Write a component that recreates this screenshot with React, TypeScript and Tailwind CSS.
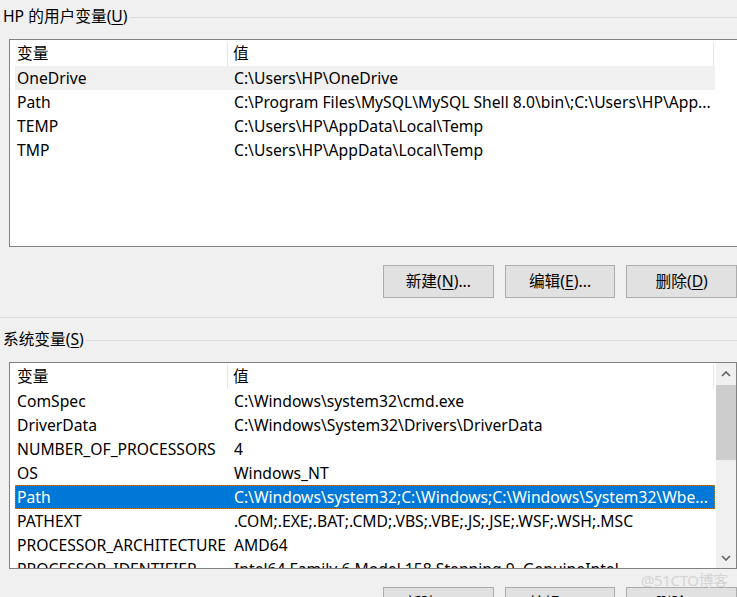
import React from 'react'

type Row = { name: string; value: string; hover?: boolean; selected?: boolean }

const userVars: Row[] = [
  { name: 'OneDrive', value: 'C:\\Users\\HP\\OneDrive', hover: true },
  { name: 'Path', value: 'C:\\Program Files\\MySQL\\MySQL Shell 8.0\\bin\\;C:\\Users\\HP\\App...' },
  { name: 'TEMP', value: 'C:\\Users\\HP\\AppData\\Local\\Temp' },
  { name: 'TMP', value: 'C:\\Users\\HP\\AppData\\Local\\Temp' },
]

const sysVars: Row[] = [
  { name: 'ComSpec', value: 'C:\\Windows\\system32\\cmd.exe' },
  { name: 'DriverData', value: 'C:\\Windows\\System32\\Drivers\\DriverData' },
  { name: 'NUMBER_OF_PROCESSORS', value: '4' },
  { name: 'OS', value: 'Windows_NT' },
  { name: 'Path', value: 'C:\\Windows\\system32;C:\\Windows;C:\\Windows\\System32\\Wbe...', selected: true },
  { name: 'PATHEXT', value: '.COM;.EXE;.BAT;.CMD;.VBS;.VBE;.JS;.JSE;.WSF;.WSH;.MSC' },
  { name: 'PROCESSOR_ARCHITECTURE', value: 'AMD64' },
  { name: 'PROCESSOR_IDENTIFIER', value: 'Intel64 Family 6 Model 158 Stepping 9, GenuineIntel' },
]

function GroupTitle({ label, hotkey }: { label: string; hotkey: string }) {
  return (
    <div className="flex items-center h-[20px] pl-[3px]">
      <span className="whitespace-nowrap leading-none">
        {label}(<span className="underline underline-offset-2">{hotkey}</span>)
      </span>
      <div className="flex-1 h-px bg-[#dcdcdc] ml-[2px]" />
    </div>
  )
}

function Header() {
  return (
    <div className="flex h-[26px] w-[700px] items-center pt-[2px]">
      <div className="w-[213px] pl-[2px] h-full flex items-center border-r border-[#e5e5e5]">变量</div>
      <div className="w-[486px] pl-[5px] h-full flex items-center border-r border-[#e5e5e5]">值</div>
    </div>
  )
}

function ListRow({ row }: { row: Row }) {
  const bg = row.selected
    ? 'bg-[#0078d7] text-white outline-1 outline-dotted outline-[#c07a2a] -outline-offset-1'
    : row.hover
      ? 'bg-[#f0f0f0]'
      : ''
  return (
    <div className={`flex h-[24px] w-[700px] items-center whitespace-nowrap pt-[2px] ${bg}`}>
      <div className="w-[213px] pl-[2px] overflow-hidden">{row.name}</div>
      <div className="flex-1 pl-[6px] overflow-hidden">{row.value}</div>
    </div>
  )
}

function Btn({ label, hotkey, dots }: { label: string; hotkey: string; dots?: boolean }) {
  return (
    <div className="w-[111px] h-[33px] bg-[#e1e1e1] border border-[#adadad] flex items-center justify-center">
      <span>
        {label}(<span className="underline underline-offset-2">{hotkey}</span>){dots ? '...' : ''}
      </span>
    </div>
  )
}

function Buttons() {
  return (
    <div className="flex gap-[11px] pl-[383px]">
      <Btn label="新建" hotkey="N" dots />
      <Btn label="编辑" hotkey="E" dots />
      <Btn label="删除" hotkey="D" />
    </div>
  )
}

function Chevron({ up }: { up?: boolean }) {
  return (
    <svg width="10" height="6" viewBox="0 0 10 6" className="block">
      <polyline
        points={up ? '1,5 5,1 9,5' : '1,1 5,5 9,1'}
        fill="none"
        stroke="#606060"
        strokeWidth="1.6"
      />
    </svg>
  )
}

export default function App() {
  return (
    <div
      className="relative w-[737px] h-[597px] overflow-hidden bg-[#f0f0f0] text-[15.7px] text-black"
      style={{ fontFamily: '"Noto Sans", "Noto Sans CJK SC", sans-serif' }}
    >
      <div className="pt-[7px]">
        <GroupTitle label="HP 的用户变量" hotkey="U" />
      </div>

      {/* user variables list */}
      <div className="ml-[9px] mt-[12px] w-[740px] h-[208px] bg-white border border-[#828282] pl-[5px]">
        <Header />
        {userVars.map((r) => (
          <ListRow key={r.name} row={r} />
        ))}
      </div>

      <div className="mt-[18px]">
        <Buttons />
      </div>

      <div className="mt-[19px] h-px bg-[#dcdcdc]" />

      <div className="mt-[12px]">
        <GroupTitle label="系统变量" hotkey="S" />
      </div>

      {/* system variables list */}
      <div className="ml-[9px] mt-[12px] w-[728px] h-[207px] bg-white border border-[#828282] flex overflow-hidden">
        <div className="pl-[5px] flex-1 overflow-hidden">
          <Header />
          {sysVars.map((r) => (
            <ListRow key={r.name} row={r} />
          ))}
        </div>
        <div className="w-[20px] bg-[#f0f0f0] flex flex-col items-center">
          <div className="h-[22px] flex items-center justify-center">
            <Chevron up />
          </div>
          <div className="w-full h-[75px] bg-[#cdcdcd]" />
          <div className="flex-1" />
          <div className="h-[20px] flex items-center justify-center">
            <Chevron />
          </div>
        </div>
      </div>

      <div className="mt-[18px]">
        <Buttons />
      </div>

      <div className="absolute left-[641px] top-[570px] text-[15px] leading-[20px] text-[#d4d4d4] tracking-tight">
        @51CTO博客
      </div>
    </div>
  )
}
